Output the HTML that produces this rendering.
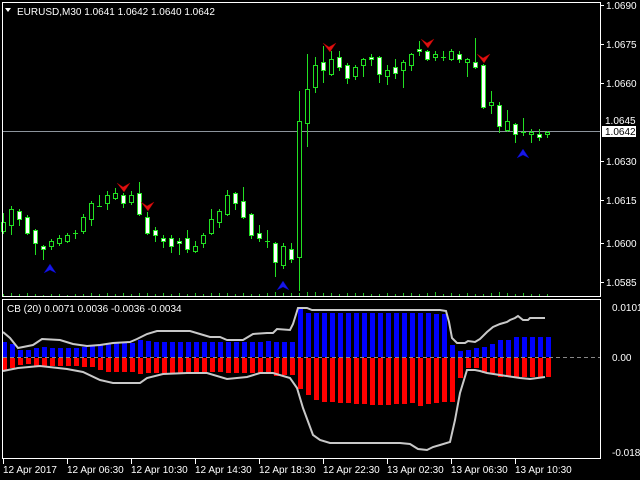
<!DOCTYPE html>
<html><head><meta charset="utf-8"><style>
html,body{margin:0;padding:0;background:#000;width:640px;height:480px;overflow:hidden}
svg{display:block}
text{font-family:"Liberation Sans",sans-serif;font-size:10px;fill:#fff}
</style></head><body>
<svg id="s" width="640" height="480" xmlns="http://www.w3.org/2000/svg">
<rect width="640" height="480" fill="#000"/>
<g id="vol"></g>
<line x1="3" y1="131.5" x2="600" y2="131.5" stroke="#8c949c" stroke-width="1"/>
<g id="cd"></g>
<g fill="#e01010" stroke="#900" stroke-width="0.5">
<polygon points="117,183 123,187 130,183 124,192"/>
<polygon points="141,202 147,206 154,202 148,211"/>
<polygon points="323,43 329,47 336,43 330,52"/>
<polygon points="421,39 427,43 434,39 428,48"/>
<polygon points="477,54 483,58 490,54 484,63"/>
</g>
<g fill="#1818e8" stroke="#00a" stroke-width="0.5">
<polygon points="44,273 50,264 56,273 50,270"/>
<polygon points="277,290 283,281 289,290 283,287"/>
<polygon points="517,158 523,149 529,158 523,155"/>
</g>
<text x="17" y="15" style="font-size:10px">EURUSD,M30  1.0641 1.0642 1.0640 1.0642</text>
<polygon points="5,8 11,8 8,12" fill="#fff"/>
<g id="hist"></g>
<line x1="3" y1="357.5" x2="600" y2="357.5" stroke="#888" stroke-dasharray="4,3"/>
<polyline fill="none" stroke="#c8c8c8" stroke-width="2" points="3,332 10,338 18,348 33,345 42,339 60,340 73,344 87,346 100,345 113,343 130,342 137,339 147,334 157,331 190,331 200,334 210,337 220,337 227,340 243,340 253,334 267,333 273,333 277,329 290,330 293,324 298,308 307,308 312,310 360,310 400,310 440,310 446,311 449,322 452,338 457,343 465,343 468,341 475,342 480,339 487,332 493,327 500,324 507,322 510,320 515,318 518,316 523,320 528,320 530,318 535,318 540,318 545,318"/>
<polyline fill="none" stroke="#c8c8c8" stroke-width="2" points="3,371 18,368 40,366 67,369 83,372 100,380 113,383 140,383 147,378 163,374 187,373 207,373 227,379 247,377 260,373 273,373 290,378 297,388 303,408 313,435 320,440 330,443 360,443 400,443 410,444 418,449 427,450 433,447 440,445 450,442 455,420 460,393 467,370 475,370 480,371 487,373 500,375 520,378 530,379 545,377"/>
<g fill="none" stroke="#fff" stroke-width="1">
<rect x="2.5" y="2.5" width="598" height="294"/>
<rect x="2.5" y="299.5" width="598" height="159"/>
</g>
<g id="axis"></g>
<rect x="602" y="126" width="34" height="11" fill="#fff"/>
<text x="605" y="135" style="fill:#000">1.0642</text>
<text x="605" y="124" style="fill:#fff">1.0645</text>
<text x="612" y="311">0.0101</text>
<text x="612" y="361">0.00</text>
<text x="612" y="456">-0.0181</text>
</svg>
<script>
var NS="http://www.w3.org/2000/svg";
function el(p,t,a){var e=document.createElementNS(NS,t);for(var k in a)e.setAttribute(k,a[k]);p.appendChild(e);return e;}
var C=[
[0,222,231,213,233,0],[1,209,225,206,234,0],[2,211,219,209,225,1],[3,217,233,215,234,1],[4,230,243,229,254,1],[5,246,249,245,259,1],[6,241,246,239,249,0],[7,238,243,235,245,0],[8,235,241,233,242,0],[9,233,233,230,238,0],[10,217,231,214,233,0],[11,203,219,201,225,0],[12,206,206,195,206,0],[13,195,203,191,209,0],[14,193,198,188,199,0],[15,195,203,193,207,1],[16,195,202,191,204,0],[17,193,214,182,215,1],[18,217,233,212,234,1],[19,230,235,227,241,1],[20,238,241,235,247,1],[21,238,246,235,252,1],[22,241,243,238,254,1],[23,238,249,230,252,1],[24,246,251,241,252,0],[25,235,243,233,247,0],[26,219,233,209,234,0],[27,211,222,209,227,0],[28,195,214,190,215,0],[29,193,203,192,209,1],[30,201,217,187,218,1],[31,214,235,213,238,1],[32,233,238,225,241,1],[33,241,241,230,247,0],[34,243,262,242,276,1],[35,246,265,243,268,0],[36,249,259,243,262,1],
[37,121,257,91,290,0],[38,89,123,54,146,0],[39,65,87,57,92,0],[40,62,70,46,82,1],[41,59,74,51,75,0],[42,57,67,51,70,1],[43,65,78,63,83,1],[44,67,76,65,79,0],[45,59,65,58,76,0],[46,57,59,54,65,1],[47,57,74,56,82,1],[48,70,76,65,84,0],[49,67,73,59,78,1],[50,62,70,60,87,0],[51,54,65,53,70,0],[52,49,51,41,55,1],[53,51,59,50,60,1],[54,54,57,51,60,0],[55,57,57,51,60,0],[56,51,59,49,60,0],[57,54,59,51,62,1],[58,59,62,58,76,0],[59,62,67,38,68,1],[60,65,107,64,108,1],[61,102,105,91,113,0],[62,105,126,102,132,1],[63,121,130,110,131,0],[64,124,134,123,142,1],[65,132,132,118,135,0],[66,132,134,129,142,0],[67,134,137,129,140,1],[68,132,134,131,137,0]];
var g=document.getElementById("cd"),G="#22e022";
C.forEach(function(c){var x=3+8*c[0];
el(g,"line",{x1:x+.5,x2:x+.5,y1:c[3],y2:c[4]+1,stroke:G,"stroke-width":1});
if(c[2]-c[1]<1){el(g,"line",{x1:x-2,x2:x+3,y1:c[1]+.5,y2:c[1]+.5,stroke:G});}
else el(g,"rect",{x:x-1.5,y:c[1]+.5,width:4,height:c[2]-c[1],fill:c[5]?"#fff":"#000",stroke:G,"stroke-width":1});
});
var v=document.getElementById("vol");
for(var i=0;i<69;i++){var h=[2,3,2,3,2,1,2,2,1,2,2,3,2,3,2,3,2,3,3,2,3,2,3,2,3,2,3,3,3,2,3,2,2,3,4,3,3][i]||([3,4,4,3,3,2,3,3,3,2,2,3,2,3,3,2,3,4,2,3,2,3,2,2,3,4,3,2,3,2,2,2][i-37]||2);
el(v,"line",{x1:3+8*i+.5,x2:3+8*i+.5,y1:296-h,y2:296,stroke:"#22c022"});}
var B=[342,344,350,350,348,347,348,348,348,348,347,346,344,343,343,343,343,340,341,342,342,342,342,342,342,342,342,342,342,342,342,342,342,341,342,342,342,308,313,313,313,313,313,313,313,313,313,313,313,313,313,313,313,313,314,314,345,351,350,348,347,344,340,340,337,337,337,337,337];
var R=[371,368,365,364,366,367,366,366,366,366,367,367,370,372,372,372,372,374,373,373,373,373,373,373,373,372,372,372,373,373,373,373,373,373,376,375,375,389,395,400,402,402,403,403,404,404,405,405,405,404,404,403,406,404,403,402,402,378,368,368,373,373,377,377,377,377,377,377,377];
var hg=document.getElementById("hist");
for(var i=0;i<69;i++){var x=3+8*i-1;
el(hg,"rect",{x:x,y:B[i],width:5,height:357-B[i],fill:"#0000ff"});
el(hg,"rect",{x:x,y:358,width:5,height:R[i]-358,fill:"#ff0000"});}
var ax=document.getElementById("axis");
var P=[["1.0690",5],["1.0675",44],["1.0660",83],["1.0630",161],["1.0615",200],["1.0600",243],["1.0585",282]];
P.forEach(function(p){el(ax,"line",{x1:601,x2:604,y1:p[1]+.5,y2:p[1]+.5,stroke:"#fff"});var t=el(ax,"text",{x:606,y:p[1]+4});t.textContent=p[0];});
var T=["12 Apr 2017","12 Apr 06:30","12 Apr 10:30","12 Apr 14:30","12 Apr 18:30","12 Apr 22:30","13 Apr 02:30","13 Apr 06:30","13 Apr 10:30"];
T.forEach(function(s,i){var x=3+64*i;el(ax,"line",{x1:x+.5,x2:x+.5,y1:459,y2:464,stroke:"#fff"});var t=el(ax,"text",{x:x,y:473});t.textContent=s;});
var tt=el(ax,"text",{x:7,y:312});tt.textContent="CB (20) 0.0071 0.0036 -0.0036 -0.0034";
</script>
</body></html>
